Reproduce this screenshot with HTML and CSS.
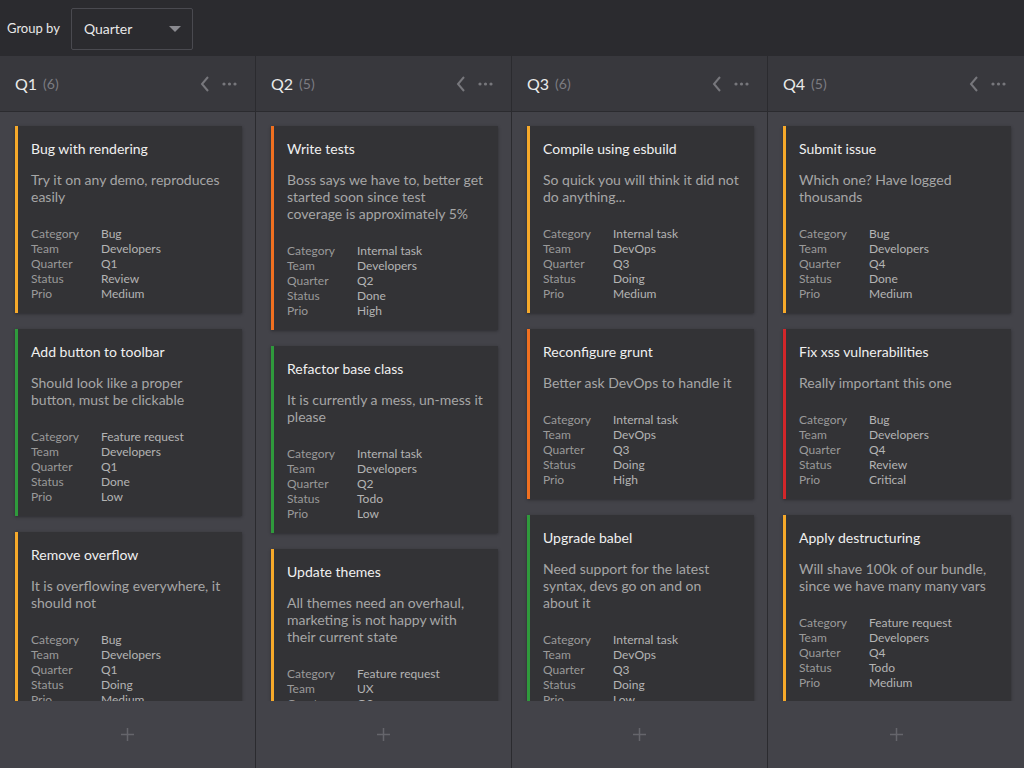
FILE: index.html
```html
<!DOCTYPE html>
<html>
<head>
<meta charset="utf-8">
<link rel="stylesheet" href="styles.css">
</head>
<body>
<div class="toolbar">
  <span class="group-label">Group by</span>
  <div class="select">
    <span>Quarter</span>
    <svg class="caret" width="12" height="6" viewBox="0 0 12 6"><path d="M0 0H12L6 6Z" fill="#8a8a90"/></svg>
  </div>
</div>
<div class="board">
  <div class="column">
    <div class="col-header">
      <span class="col-title">Q1</span><span class="col-count">(6)</span>
      <span class="spacer"></span>
      <svg class="chev" width="10" height="16" viewBox="0 0 10 16"><path d="M8 1L2 8L8 15" fill="none" stroke="#77777c" stroke-width="2"/></svg>
      <svg class="dots" width="15" height="4" viewBox="0 0 15 4"><circle cx="2" cy="2" r="1.6" fill="#77777c"/><circle cx="7.5" cy="2" r="1.6" fill="#77777c"/><circle cx="13" cy="2" r="1.6" fill="#77777c"/></svg>
    </div>
    <div class="cards">
      <div class="card amber">
        <div class="title">Bug with rendering</div>
        <div class="desc">Try it on any demo, reproduces easily</div>
        <div class="fields"><span>Category</span><span>Bug</span><span>Team</span><span>Developers</span><span>Quarter</span><span>Q1</span><span>Status</span><span>Review</span><span>Prio</span><span>Medium</span></div>
      </div>
      <div class="card green">
        <div class="title">Add button to toolbar</div>
        <div class="desc">Should look like a proper button, must be clickable</div>
        <div class="fields"><span>Category</span><span>Feature request</span><span>Team</span><span>Developers</span><span>Quarter</span><span>Q1</span><span>Status</span><span>Done</span><span>Prio</span><span>Low</span></div>
      </div>
      <div class="card amber">
        <div class="title">Remove overflow</div>
        <div class="desc">It is overflowing everywhere, it should not</div>
        <div class="fields"><span>Category</span><span>Bug</span><span>Team</span><span>Developers</span><span>Quarter</span><span>Q1</span><span>Status</span><span>Doing</span><span>Prio</span><span>Medium</span></div>
      </div>
    </div>
    <div class="col-footer"><svg width="13" height="13" viewBox="0 0 13 13"><path d="M6.5 0V13M0 6.5H13" stroke="#65656b" stroke-width="1.5"/></svg></div>
  </div>

  <div class="column">
    <div class="col-header">
      <span class="col-title">Q2</span><span class="col-count">(5)</span>
      <span class="spacer"></span>
      <svg class="chev" width="10" height="16" viewBox="0 0 10 16"><path d="M8 1L2 8L8 15" fill="none" stroke="#77777c" stroke-width="2"/></svg>
      <svg class="dots" width="15" height="4" viewBox="0 0 15 4"><circle cx="2" cy="2" r="1.6" fill="#77777c"/><circle cx="7.5" cy="2" r="1.6" fill="#77777c"/><circle cx="13" cy="2" r="1.6" fill="#77777c"/></svg>
    </div>
    <div class="cards">
      <div class="card orange">
        <div class="title">Write tests</div>
        <div class="desc">Boss says we have to, better get started soon since test coverage is approximately 5%</div>
        <div class="fields"><span>Category</span><span>Internal task</span><span>Team</span><span>Developers</span><span>Quarter</span><span>Q2</span><span>Status</span><span>Done</span><span>Prio</span><span>High</span></div>
      </div>
      <div class="card green">
        <div class="title">Refactor base class</div>
        <div class="desc">It is currently a mess, un-mess it please</div>
        <div class="fields"><span>Category</span><span>Internal task</span><span>Team</span><span>Developers</span><span>Quarter</span><span>Q2</span><span>Status</span><span>Todo</span><span>Prio</span><span>Low</span></div>
      </div>
      <div class="card amber">
        <div class="title">Update themes</div>
        <div class="desc">All themes need an overhaul, marketing is not happy with their current state</div>
        <div class="fields"><span>Category</span><span>Feature request</span><span>Team</span><span>UX</span><span>Quarter</span><span>Q2</span><span>Status</span><span>Todo</span><span>Prio</span><span>Medium</span></div>
      </div>
    </div>
    <div class="col-footer"><svg width="13" height="13" viewBox="0 0 13 13"><path d="M6.5 0V13M0 6.5H13" stroke="#65656b" stroke-width="1.5"/></svg></div>
  </div>

  <div class="column">
    <div class="col-header">
      <span class="col-title">Q3</span><span class="col-count">(6)</span>
      <span class="spacer"></span>
      <svg class="chev" width="10" height="16" viewBox="0 0 10 16"><path d="M8 1L2 8L8 15" fill="none" stroke="#77777c" stroke-width="2"/></svg>
      <svg class="dots" width="15" height="4" viewBox="0 0 15 4"><circle cx="2" cy="2" r="1.6" fill="#77777c"/><circle cx="7.5" cy="2" r="1.6" fill="#77777c"/><circle cx="13" cy="2" r="1.6" fill="#77777c"/></svg>
    </div>
    <div class="cards">
      <div class="card amber">
        <div class="title">Compile using esbuild</div>
        <div class="desc">So quick you will think it did not do anything...</div>
        <div class="fields"><span>Category</span><span>Internal task</span><span>Team</span><span>DevOps</span><span>Quarter</span><span>Q3</span><span>Status</span><span>Doing</span><span>Prio</span><span>Medium</span></div>
      </div>
      <div class="card orange">
        <div class="title">Reconfigure grunt</div>
        <div class="desc">Better ask DevOps to handle it</div>
        <div class="fields"><span>Category</span><span>Internal task</span><span>Team</span><span>DevOps</span><span>Quarter</span><span>Q3</span><span>Status</span><span>Doing</span><span>Prio</span><span>High</span></div>
      </div>
      <div class="card green">
        <div class="title">Upgrade babel</div>
        <div class="desc">Need support for the latest syntax, devs go on and on about it</div>
        <div class="fields"><span>Category</span><span>Internal task</span><span>Team</span><span>DevOps</span><span>Quarter</span><span>Q3</span><span>Status</span><span>Doing</span><span>Prio</span><span>Low</span></div>
      </div>
    </div>
    <div class="col-footer"><svg width="13" height="13" viewBox="0 0 13 13"><path d="M6.5 0V13M0 6.5H13" stroke="#65656b" stroke-width="1.5"/></svg></div>
  </div>

  <div class="column">
    <div class="col-header">
      <span class="col-title">Q4</span><span class="col-count">(5)</span>
      <span class="spacer"></span>
      <svg class="chev" width="10" height="16" viewBox="0 0 10 16"><path d="M8 1L2 8L8 15" fill="none" stroke="#77777c" stroke-width="2"/></svg>
      <svg class="dots" width="15" height="4" viewBox="0 0 15 4"><circle cx="2" cy="2" r="1.6" fill="#77777c"/><circle cx="7.5" cy="2" r="1.6" fill="#77777c"/><circle cx="13" cy="2" r="1.6" fill="#77777c"/></svg>
    </div>
    <div class="cards">
      <div class="card amber">
        <div class="title">Submit issue</div>
        <div class="desc">Which one? Have logged thousands</div>
        <div class="fields"><span>Category</span><span>Bug</span><span>Team</span><span>Developers</span><span>Quarter</span><span>Q4</span><span>Status</span><span>Done</span><span>Prio</span><span>Medium</span></div>
      </div>
      <div class="card red">
        <div class="title">Fix xss vulnerabilities</div>
        <div class="desc">Really important this one</div>
        <div class="fields"><span>Category</span><span>Bug</span><span>Team</span><span>Developers</span><span>Quarter</span><span>Q4</span><span>Status</span><span>Review</span><span>Prio</span><span>Critical</span></div>
      </div>
      <div class="card amber">
        <div class="title">Apply destructuring</div>
        <div class="desc">Will shave 100k of our bundle, since we have many many vars</div>
        <div class="fields"><span>Category</span><span>Feature request</span><span>Team</span><span>Developers</span><span>Quarter</span><span>Q4</span><span>Status</span><span>Todo</span><span>Prio</span><span>Medium</span></div>
      </div>
    </div>
    <div class="col-footer"><svg width="13" height="13" viewBox="0 0 13 13"><path d="M6.5 0V13M0 6.5H13" stroke="#65656b" stroke-width="1.5"/></svg></div>
  </div>
</div>
</body>
</html>
```
FILE: styles.css
```css
* { box-sizing: border-box; }
html, body { margin: 0; padding: 0; }
body {
  width: 1024px;
  height: 768px;
  overflow: hidden;
  background: #2b2b2f;
  font-family: Lato, "Open Sans", sans-serif;
  color: #e6e6e6;
  display: flex;
  flex-direction: column;
}
.toolbar {
  height: 56px;
  flex: none;
  display: flex;
  align-items: center;
  padding: 0 7px;
  gap: 11px;
  background: #2b2b2f;
}
.group-label { font-size: 13px; color: #e8e8e8; }
.select {
  width: 122px;
  height: 42px;
  border: 1px solid #4a4a50;
  border-radius: 2px;
  display: flex;
  align-items: center;
  justify-content: space-between;
  padding: 0 11px 0 12px;
  font-size: 14px;
  color: #e8e8e8;
  margin-top: 1px;
}
.board {
  flex: 1;
  display: flex;
  min-height: 0;
}
.column {
  width: 256px;
  flex: none;
  display: flex;
  flex-direction: column;
  background: #434349;
  border-right: 1px solid #2b2b2f;
}
.column:last-child { border-right: none; width: 256px; }
.col-header {
  height: 56px;
  flex: none;
  background: #38383d;
  border-bottom: 1px solid #2b2b2f;
  display: flex;
  align-items: center;
  padding: 0 18px 0 15px;
}
.col-title { font-size: 16px; color: #eaeaea; }
.col-count { font-size: 14px; color: #7c7c82; margin-left: 6px; }
.spacer { flex: 1; }
.chev { margin-right: 12px; }
.cards {
  flex: 1;
  overflow: hidden;
  padding: 14px 13px 0 15px;
  display: flex;
  flex-direction: column;
  gap: 16px;
}
.card {
  flex: none;
  background: #333336;
  border-left: 3px solid #f5a623;
  padding: 14px 14.4px 12px 13px;
  box-shadow: 0 1px 3px rgba(0,0,0,0.35);
}
.card.amber { border-left-color: #f6a92a; }
.card.orange { border-left-color: #f07020; }
.card.green { border-left-color: #2f9a3c; }
.card.red { border-left-color: #d2262a; }
.title {
  font-size: 14px;
  line-height: 17px;
  color: #f0f0f0;
}
.desc {
  margin-top: 14px;
  font-size: 14px;
  line-height: 17px;
  color: #a6a6a6;
}
.fields {
  margin-top: 21px;
  display: grid;
  grid-template-columns: 70px 1fr;
  font-size: 12px;
  line-height: 15px;
}
.fields span:nth-child(odd) { color: #9a9a9a; }
.fields span:nth-child(even) { color: #b4b4b4; }
.col-footer {
  height: 67px;
  flex: none;
  display: flex;
  align-items: center;
  justify-content: center;
}
```
